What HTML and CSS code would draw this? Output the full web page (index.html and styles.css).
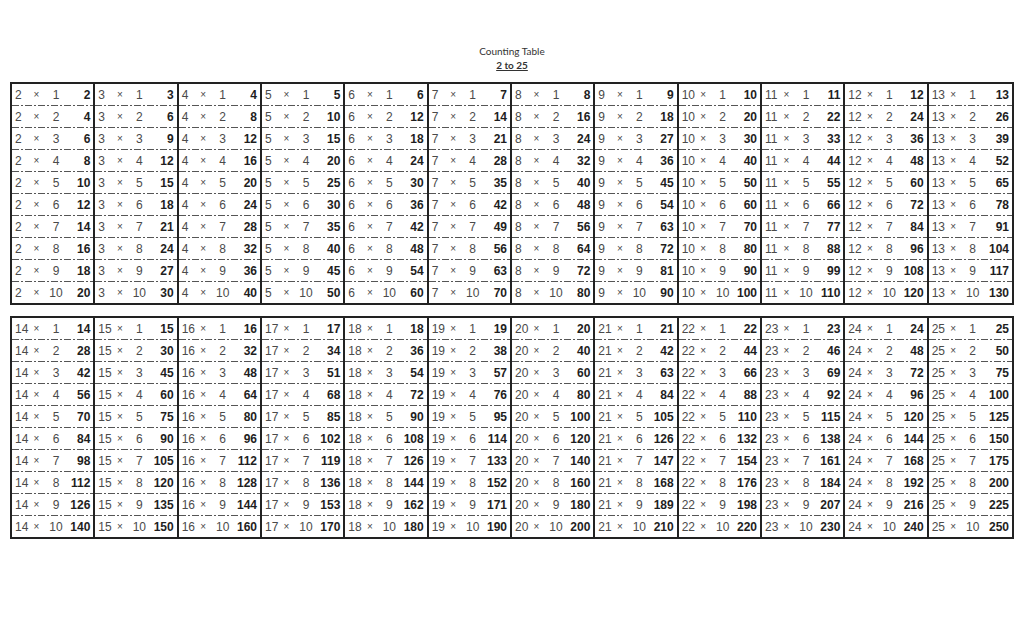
FILE: index.html
```html
<!DOCTYPE html>
<html>
<head>
<meta charset="utf-8">
<link rel="stylesheet" href="styles.css">
</head>
<body>
<header class="title">
  <div class="t1">Counting Table</div>
  <div class="t2">2 to 25</div>
</header>
<main class="tables">
<section class="table">
<div class="col">
<div class="cell"><span>2</span><i>×</i><span>1</span><b>2</b></div>
<div class="cell"><span>2</span><i>×</i><span>2</span><b>4</b></div>
<div class="cell"><span>2</span><i>×</i><span>3</span><b>6</b></div>
<div class="cell"><span>2</span><i>×</i><span>4</span><b>8</b></div>
<div class="cell"><span>2</span><i>×</i><span>5</span><b>10</b></div>
<div class="cell"><span>2</span><i>×</i><span>6</span><b>12</b></div>
<div class="cell"><span>2</span><i>×</i><span>7</span><b>14</b></div>
<div class="cell"><span>2</span><i>×</i><span>8</span><b>16</b></div>
<div class="cell"><span>2</span><i>×</i><span>9</span><b>18</b></div>
<div class="cell"><span>2</span><i>×</i><span>10</span><b>20</b></div>
</div>
<div class="col">
<div class="cell"><span>3</span><i>×</i><span>1</span><b>3</b></div>
<div class="cell"><span>3</span><i>×</i><span>2</span><b>6</b></div>
<div class="cell"><span>3</span><i>×</i><span>3</span><b>9</b></div>
<div class="cell"><span>3</span><i>×</i><span>4</span><b>12</b></div>
<div class="cell"><span>3</span><i>×</i><span>5</span><b>15</b></div>
<div class="cell"><span>3</span><i>×</i><span>6</span><b>18</b></div>
<div class="cell"><span>3</span><i>×</i><span>7</span><b>21</b></div>
<div class="cell"><span>3</span><i>×</i><span>8</span><b>24</b></div>
<div class="cell"><span>3</span><i>×</i><span>9</span><b>27</b></div>
<div class="cell"><span>3</span><i>×</i><span>10</span><b>30</b></div>
</div>
<div class="col">
<div class="cell"><span>4</span><i>×</i><span>1</span><b>4</b></div>
<div class="cell"><span>4</span><i>×</i><span>2</span><b>8</b></div>
<div class="cell"><span>4</span><i>×</i><span>3</span><b>12</b></div>
<div class="cell"><span>4</span><i>×</i><span>4</span><b>16</b></div>
<div class="cell"><span>4</span><i>×</i><span>5</span><b>20</b></div>
<div class="cell"><span>4</span><i>×</i><span>6</span><b>24</b></div>
<div class="cell"><span>4</span><i>×</i><span>7</span><b>28</b></div>
<div class="cell"><span>4</span><i>×</i><span>8</span><b>32</b></div>
<div class="cell"><span>4</span><i>×</i><span>9</span><b>36</b></div>
<div class="cell"><span>4</span><i>×</i><span>10</span><b>40</b></div>
</div>
<div class="col">
<div class="cell"><span>5</span><i>×</i><span>1</span><b>5</b></div>
<div class="cell"><span>5</span><i>×</i><span>2</span><b>10</b></div>
<div class="cell"><span>5</span><i>×</i><span>3</span><b>15</b></div>
<div class="cell"><span>5</span><i>×</i><span>4</span><b>20</b></div>
<div class="cell"><span>5</span><i>×</i><span>5</span><b>25</b></div>
<div class="cell"><span>5</span><i>×</i><span>6</span><b>30</b></div>
<div class="cell"><span>5</span><i>×</i><span>7</span><b>35</b></div>
<div class="cell"><span>5</span><i>×</i><span>8</span><b>40</b></div>
<div class="cell"><span>5</span><i>×</i><span>9</span><b>45</b></div>
<div class="cell"><span>5</span><i>×</i><span>10</span><b>50</b></div>
</div>
<div class="col">
<div class="cell"><span>6</span><i>×</i><span>1</span><b>6</b></div>
<div class="cell"><span>6</span><i>×</i><span>2</span><b>12</b></div>
<div class="cell"><span>6</span><i>×</i><span>3</span><b>18</b></div>
<div class="cell"><span>6</span><i>×</i><span>4</span><b>24</b></div>
<div class="cell"><span>6</span><i>×</i><span>5</span><b>30</b></div>
<div class="cell"><span>6</span><i>×</i><span>6</span><b>36</b></div>
<div class="cell"><span>6</span><i>×</i><span>7</span><b>42</b></div>
<div class="cell"><span>6</span><i>×</i><span>8</span><b>48</b></div>
<div class="cell"><span>6</span><i>×</i><span>9</span><b>54</b></div>
<div class="cell"><span>6</span><i>×</i><span>10</span><b>60</b></div>
</div>
<div class="col">
<div class="cell"><span>7</span><i>×</i><span>1</span><b>7</b></div>
<div class="cell"><span>7</span><i>×</i><span>2</span><b>14</b></div>
<div class="cell"><span>7</span><i>×</i><span>3</span><b>21</b></div>
<div class="cell"><span>7</span><i>×</i><span>4</span><b>28</b></div>
<div class="cell"><span>7</span><i>×</i><span>5</span><b>35</b></div>
<div class="cell"><span>7</span><i>×</i><span>6</span><b>42</b></div>
<div class="cell"><span>7</span><i>×</i><span>7</span><b>49</b></div>
<div class="cell"><span>7</span><i>×</i><span>8</span><b>56</b></div>
<div class="cell"><span>7</span><i>×</i><span>9</span><b>63</b></div>
<div class="cell"><span>7</span><i>×</i><span>10</span><b>70</b></div>
</div>
<div class="col">
<div class="cell"><span>8</span><i>×</i><span>1</span><b>8</b></div>
<div class="cell"><span>8</span><i>×</i><span>2</span><b>16</b></div>
<div class="cell"><span>8</span><i>×</i><span>3</span><b>24</b></div>
<div class="cell"><span>8</span><i>×</i><span>4</span><b>32</b></div>
<div class="cell"><span>8</span><i>×</i><span>5</span><b>40</b></div>
<div class="cell"><span>8</span><i>×</i><span>6</span><b>48</b></div>
<div class="cell"><span>8</span><i>×</i><span>7</span><b>56</b></div>
<div class="cell"><span>8</span><i>×</i><span>8</span><b>64</b></div>
<div class="cell"><span>8</span><i>×</i><span>9</span><b>72</b></div>
<div class="cell"><span>8</span><i>×</i><span>10</span><b>80</b></div>
</div>
<div class="col">
<div class="cell"><span>9</span><i>×</i><span>1</span><b>9</b></div>
<div class="cell"><span>9</span><i>×</i><span>2</span><b>18</b></div>
<div class="cell"><span>9</span><i>×</i><span>3</span><b>27</b></div>
<div class="cell"><span>9</span><i>×</i><span>4</span><b>36</b></div>
<div class="cell"><span>9</span><i>×</i><span>5</span><b>45</b></div>
<div class="cell"><span>9</span><i>×</i><span>6</span><b>54</b></div>
<div class="cell"><span>9</span><i>×</i><span>7</span><b>63</b></div>
<div class="cell"><span>9</span><i>×</i><span>8</span><b>72</b></div>
<div class="cell"><span>9</span><i>×</i><span>9</span><b>81</b></div>
<div class="cell"><span>9</span><i>×</i><span>10</span><b>90</b></div>
</div>
<div class="col">
<div class="cell"><span>10</span><i>×</i><span>1</span><b>10</b></div>
<div class="cell"><span>10</span><i>×</i><span>2</span><b>20</b></div>
<div class="cell"><span>10</span><i>×</i><span>3</span><b>30</b></div>
<div class="cell"><span>10</span><i>×</i><span>4</span><b>40</b></div>
<div class="cell"><span>10</span><i>×</i><span>5</span><b>50</b></div>
<div class="cell"><span>10</span><i>×</i><span>6</span><b>60</b></div>
<div class="cell"><span>10</span><i>×</i><span>7</span><b>70</b></div>
<div class="cell"><span>10</span><i>×</i><span>8</span><b>80</b></div>
<div class="cell"><span>10</span><i>×</i><span>9</span><b>90</b></div>
<div class="cell"><span>10</span><i>×</i><span>10</span><b>100</b></div>
</div>
<div class="col">
<div class="cell"><span>11</span><i>×</i><span>1</span><b>11</b></div>
<div class="cell"><span>11</span><i>×</i><span>2</span><b>22</b></div>
<div class="cell"><span>11</span><i>×</i><span>3</span><b>33</b></div>
<div class="cell"><span>11</span><i>×</i><span>4</span><b>44</b></div>
<div class="cell"><span>11</span><i>×</i><span>5</span><b>55</b></div>
<div class="cell"><span>11</span><i>×</i><span>6</span><b>66</b></div>
<div class="cell"><span>11</span><i>×</i><span>7</span><b>77</b></div>
<div class="cell"><span>11</span><i>×</i><span>8</span><b>88</b></div>
<div class="cell"><span>11</span><i>×</i><span>9</span><b>99</b></div>
<div class="cell"><span>11</span><i>×</i><span>10</span><b>110</b></div>
</div>
<div class="col">
<div class="cell"><span>12</span><i>×</i><span>1</span><b>12</b></div>
<div class="cell"><span>12</span><i>×</i><span>2</span><b>24</b></div>
<div class="cell"><span>12</span><i>×</i><span>3</span><b>36</b></div>
<div class="cell"><span>12</span><i>×</i><span>4</span><b>48</b></div>
<div class="cell"><span>12</span><i>×</i><span>5</span><b>60</b></div>
<div class="cell"><span>12</span><i>×</i><span>6</span><b>72</b></div>
<div class="cell"><span>12</span><i>×</i><span>7</span><b>84</b></div>
<div class="cell"><span>12</span><i>×</i><span>8</span><b>96</b></div>
<div class="cell"><span>12</span><i>×</i><span>9</span><b>108</b></div>
<div class="cell"><span>12</span><i>×</i><span>10</span><b>120</b></div>
</div>
<div class="col">
<div class="cell"><span>13</span><i>×</i><span>1</span><b>13</b></div>
<div class="cell"><span>13</span><i>×</i><span>2</span><b>26</b></div>
<div class="cell"><span>13</span><i>×</i><span>3</span><b>39</b></div>
<div class="cell"><span>13</span><i>×</i><span>4</span><b>52</b></div>
<div class="cell"><span>13</span><i>×</i><span>5</span><b>65</b></div>
<div class="cell"><span>13</span><i>×</i><span>6</span><b>78</b></div>
<div class="cell"><span>13</span><i>×</i><span>7</span><b>91</b></div>
<div class="cell"><span>13</span><i>×</i><span>8</span><b>104</b></div>
<div class="cell"><span>13</span><i>×</i><span>9</span><b>117</b></div>
<div class="cell"><span>13</span><i>×</i><span>10</span><b>130</b></div>
</div>
</section>
<section class="table">
<div class="col">
<div class="cell"><span>14</span><i>×</i><span>1</span><b>14</b></div>
<div class="cell"><span>14</span><i>×</i><span>2</span><b>28</b></div>
<div class="cell"><span>14</span><i>×</i><span>3</span><b>42</b></div>
<div class="cell"><span>14</span><i>×</i><span>4</span><b>56</b></div>
<div class="cell"><span>14</span><i>×</i><span>5</span><b>70</b></div>
<div class="cell"><span>14</span><i>×</i><span>6</span><b>84</b></div>
<div class="cell"><span>14</span><i>×</i><span>7</span><b>98</b></div>
<div class="cell"><span>14</span><i>×</i><span>8</span><b>112</b></div>
<div class="cell"><span>14</span><i>×</i><span>9</span><b>126</b></div>
<div class="cell"><span>14</span><i>×</i><span>10</span><b>140</b></div>
</div>
<div class="col">
<div class="cell"><span>15</span><i>×</i><span>1</span><b>15</b></div>
<div class="cell"><span>15</span><i>×</i><span>2</span><b>30</b></div>
<div class="cell"><span>15</span><i>×</i><span>3</span><b>45</b></div>
<div class="cell"><span>15</span><i>×</i><span>4</span><b>60</b></div>
<div class="cell"><span>15</span><i>×</i><span>5</span><b>75</b></div>
<div class="cell"><span>15</span><i>×</i><span>6</span><b>90</b></div>
<div class="cell"><span>15</span><i>×</i><span>7</span><b>105</b></div>
<div class="cell"><span>15</span><i>×</i><span>8</span><b>120</b></div>
<div class="cell"><span>15</span><i>×</i><span>9</span><b>135</b></div>
<div class="cell"><span>15</span><i>×</i><span>10</span><b>150</b></div>
</div>
<div class="col">
<div class="cell"><span>16</span><i>×</i><span>1</span><b>16</b></div>
<div class="cell"><span>16</span><i>×</i><span>2</span><b>32</b></div>
<div class="cell"><span>16</span><i>×</i><span>3</span><b>48</b></div>
<div class="cell"><span>16</span><i>×</i><span>4</span><b>64</b></div>
<div class="cell"><span>16</span><i>×</i><span>5</span><b>80</b></div>
<div class="cell"><span>16</span><i>×</i><span>6</span><b>96</b></div>
<div class="cell"><span>16</span><i>×</i><span>7</span><b>112</b></div>
<div class="cell"><span>16</span><i>×</i><span>8</span><b>128</b></div>
<div class="cell"><span>16</span><i>×</i><span>9</span><b>144</b></div>
<div class="cell"><span>16</span><i>×</i><span>10</span><b>160</b></div>
</div>
<div class="col">
<div class="cell"><span>17</span><i>×</i><span>1</span><b>17</b></div>
<div class="cell"><span>17</span><i>×</i><span>2</span><b>34</b></div>
<div class="cell"><span>17</span><i>×</i><span>3</span><b>51</b></div>
<div class="cell"><span>17</span><i>×</i><span>4</span><b>68</b></div>
<div class="cell"><span>17</span><i>×</i><span>5</span><b>85</b></div>
<div class="cell"><span>17</span><i>×</i><span>6</span><b>102</b></div>
<div class="cell"><span>17</span><i>×</i><span>7</span><b>119</b></div>
<div class="cell"><span>17</span><i>×</i><span>8</span><b>136</b></div>
<div class="cell"><span>17</span><i>×</i><span>9</span><b>153</b></div>
<div class="cell"><span>17</span><i>×</i><span>10</span><b>170</b></div>
</div>
<div class="col">
<div class="cell"><span>18</span><i>×</i><span>1</span><b>18</b></div>
<div class="cell"><span>18</span><i>×</i><span>2</span><b>36</b></div>
<div class="cell"><span>18</span><i>×</i><span>3</span><b>54</b></div>
<div class="cell"><span>18</span><i>×</i><span>4</span><b>72</b></div>
<div class="cell"><span>18</span><i>×</i><span>5</span><b>90</b></div>
<div class="cell"><span>18</span><i>×</i><span>6</span><b>108</b></div>
<div class="cell"><span>18</span><i>×</i><span>7</span><b>126</b></div>
<div class="cell"><span>18</span><i>×</i><span>8</span><b>144</b></div>
<div class="cell"><span>18</span><i>×</i><span>9</span><b>162</b></div>
<div class="cell"><span>18</span><i>×</i><span>10</span><b>180</b></div>
</div>
<div class="col">
<div class="cell"><span>19</span><i>×</i><span>1</span><b>19</b></div>
<div class="cell"><span>19</span><i>×</i><span>2</span><b>38</b></div>
<div class="cell"><span>19</span><i>×</i><span>3</span><b>57</b></div>
<div class="cell"><span>19</span><i>×</i><span>4</span><b>76</b></div>
<div class="cell"><span>19</span><i>×</i><span>5</span><b>95</b></div>
<div class="cell"><span>19</span><i>×</i><span>6</span><b>114</b></div>
<div class="cell"><span>19</span><i>×</i><span>7</span><b>133</b></div>
<div class="cell"><span>19</span><i>×</i><span>8</span><b>152</b></div>
<div class="cell"><span>19</span><i>×</i><span>9</span><b>171</b></div>
<div class="cell"><span>19</span><i>×</i><span>10</span><b>190</b></div>
</div>
<div class="col">
<div class="cell"><span>20</span><i>×</i><span>1</span><b>20</b></div>
<div class="cell"><span>20</span><i>×</i><span>2</span><b>40</b></div>
<div class="cell"><span>20</span><i>×</i><span>3</span><b>60</b></div>
<div class="cell"><span>20</span><i>×</i><span>4</span><b>80</b></div>
<div class="cell"><span>20</span><i>×</i><span>5</span><b>100</b></div>
<div class="cell"><span>20</span><i>×</i><span>6</span><b>120</b></div>
<div class="cell"><span>20</span><i>×</i><span>7</span><b>140</b></div>
<div class="cell"><span>20</span><i>×</i><span>8</span><b>160</b></div>
<div class="cell"><span>20</span><i>×</i><span>9</span><b>180</b></div>
<div class="cell"><span>20</span><i>×</i><span>10</span><b>200</b></div>
</div>
<div class="col">
<div class="cell"><span>21</span><i>×</i><span>1</span><b>21</b></div>
<div class="cell"><span>21</span><i>×</i><span>2</span><b>42</b></div>
<div class="cell"><span>21</span><i>×</i><span>3</span><b>63</b></div>
<div class="cell"><span>21</span><i>×</i><span>4</span><b>84</b></div>
<div class="cell"><span>21</span><i>×</i><span>5</span><b>105</b></div>
<div class="cell"><span>21</span><i>×</i><span>6</span><b>126</b></div>
<div class="cell"><span>21</span><i>×</i><span>7</span><b>147</b></div>
<div class="cell"><span>21</span><i>×</i><span>8</span><b>168</b></div>
<div class="cell"><span>21</span><i>×</i><span>9</span><b>189</b></div>
<div class="cell"><span>21</span><i>×</i><span>10</span><b>210</b></div>
</div>
<div class="col">
<div class="cell"><span>22</span><i>×</i><span>1</span><b>22</b></div>
<div class="cell"><span>22</span><i>×</i><span>2</span><b>44</b></div>
<div class="cell"><span>22</span><i>×</i><span>3</span><b>66</b></div>
<div class="cell"><span>22</span><i>×</i><span>4</span><b>88</b></div>
<div class="cell"><span>22</span><i>×</i><span>5</span><b>110</b></div>
<div class="cell"><span>22</span><i>×</i><span>6</span><b>132</b></div>
<div class="cell"><span>22</span><i>×</i><span>7</span><b>154</b></div>
<div class="cell"><span>22</span><i>×</i><span>8</span><b>176</b></div>
<div class="cell"><span>22</span><i>×</i><span>9</span><b>198</b></div>
<div class="cell"><span>22</span><i>×</i><span>10</span><b>220</b></div>
</div>
<div class="col">
<div class="cell"><span>23</span><i>×</i><span>1</span><b>23</b></div>
<div class="cell"><span>23</span><i>×</i><span>2</span><b>46</b></div>
<div class="cell"><span>23</span><i>×</i><span>3</span><b>69</b></div>
<div class="cell"><span>23</span><i>×</i><span>4</span><b>92</b></div>
<div class="cell"><span>23</span><i>×</i><span>5</span><b>115</b></div>
<div class="cell"><span>23</span><i>×</i><span>6</span><b>138</b></div>
<div class="cell"><span>23</span><i>×</i><span>7</span><b>161</b></div>
<div class="cell"><span>23</span><i>×</i><span>8</span><b>184</b></div>
<div class="cell"><span>23</span><i>×</i><span>9</span><b>207</b></div>
<div class="cell"><span>23</span><i>×</i><span>10</span><b>230</b></div>
</div>
<div class="col">
<div class="cell"><span>24</span><i>×</i><span>1</span><b>24</b></div>
<div class="cell"><span>24</span><i>×</i><span>2</span><b>48</b></div>
<div class="cell"><span>24</span><i>×</i><span>3</span><b>72</b></div>
<div class="cell"><span>24</span><i>×</i><span>4</span><b>96</b></div>
<div class="cell"><span>24</span><i>×</i><span>5</span><b>120</b></div>
<div class="cell"><span>24</span><i>×</i><span>6</span><b>144</b></div>
<div class="cell"><span>24</span><i>×</i><span>7</span><b>168</b></div>
<div class="cell"><span>24</span><i>×</i><span>8</span><b>192</b></div>
<div class="cell"><span>24</span><i>×</i><span>9</span><b>216</b></div>
<div class="cell"><span>24</span><i>×</i><span>10</span><b>240</b></div>
</div>
<div class="col">
<div class="cell"><span>25</span><i>×</i><span>1</span><b>25</b></div>
<div class="cell"><span>25</span><i>×</i><span>2</span><b>50</b></div>
<div class="cell"><span>25</span><i>×</i><span>3</span><b>75</b></div>
<div class="cell"><span>25</span><i>×</i><span>4</span><b>100</b></div>
<div class="cell"><span>25</span><i>×</i><span>5</span><b>125</b></div>
<div class="cell"><span>25</span><i>×</i><span>6</span><b>150</b></div>
<div class="cell"><span>25</span><i>×</i><span>7</span><b>175</b></div>
<div class="cell"><span>25</span><i>×</i><span>8</span><b>200</b></div>
<div class="cell"><span>25</span><i>×</i><span>9</span><b>225</b></div>
<div class="cell"><span>25</span><i>×</i><span>10</span><b>250</b></div>
</div>
</section>
</main>
</body>
</html>
```

FILE: styles.css
```css
html, body {
  margin: 0;
  padding: 0;
  background: #fff;
}

body {
  width: 1024px;
  height: 622px;
  overflow: hidden;
  font-family: "Liberation Sans", Arial, sans-serif;
}

.title {
  padding-top: 44px;
  text-align: center;
  font-family: Lato, "Open Sans", sans-serif;
  font-size: 10px;
  line-height: 14px;
  color: #333;
}

.t2 {
  font-weight: bold;
  text-decoration: underline;
}

.tables {
  margin: 10px 10px 0 10px;
  display: flex;
  flex-direction: column;
  gap: 11px;
}

.table {
  display: grid;
  grid-template-columns: repeat(12, 1fr);
  border: 2px solid #222;
}

.col {
  display: flex;
  flex-direction: column;
  border-right: 2px solid #222;
  min-width: 0;
}

.col:last-child {
  border-right: none;
}

.cell {
  height: 21px;
  display: grid;
  grid-template-columns: 14px 15px 24px 1fr;
  align-items: center;
  padding: 0 3px 0 3px;
  font-family: "Liberation Sans", Arial, sans-serif;
  font-size: 12px;
  color: #4a4a4a;
}

.cell + .cell {
  height: 21px;
  padding-top: 1px;
  background-image: repeating-linear-gradient(to right,
    #555 0 7px, transparent 7px 9px, #555 9px 11px, transparent 11px 13px);
  background-size: 100% 1px;
  background-repeat: no-repeat;
  background-position: 0 0;
}

.cell i {
  font-style: normal;
  font-size: 10px;
  text-align: center;
}

.cell span:nth-of-type(2) {
  text-align: center;
}

.cell b {
  text-align: right;
  color: #1e1e1e;
  font-weight: bold;
}
```
